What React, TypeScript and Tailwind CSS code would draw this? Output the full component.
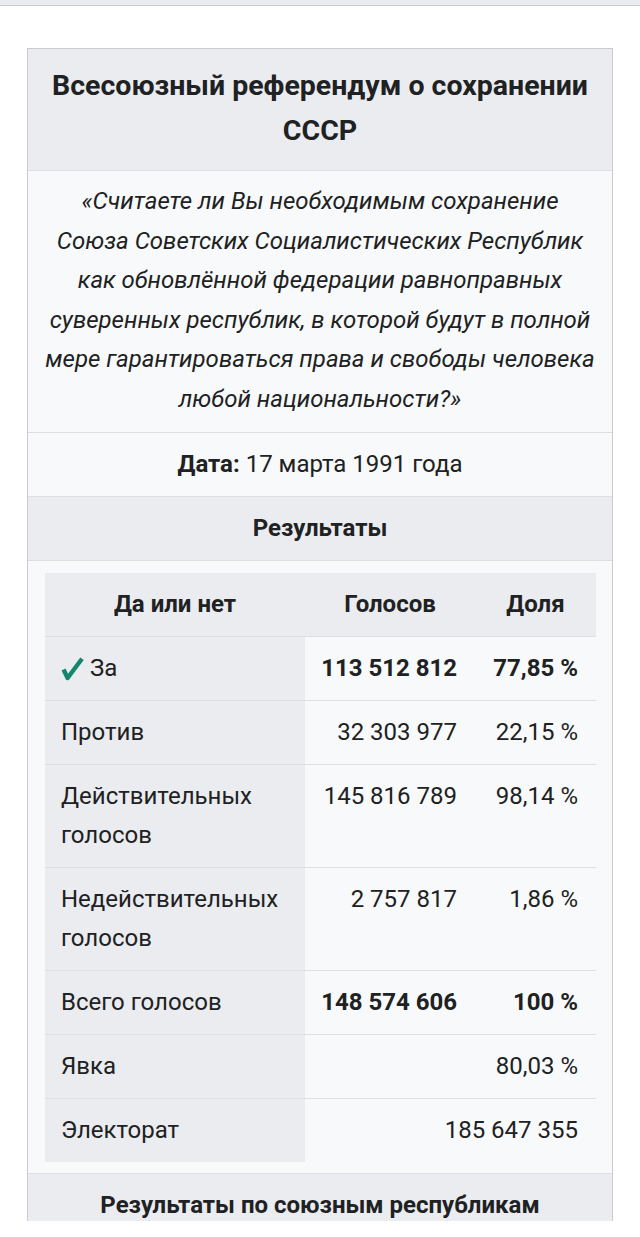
import React from "react";

type Row = {
  label: string;
  votes?: string;
  share?: string;
  bold?: boolean;
  check?: boolean;
  span?: string;
};

const rows: Row[] = [
  { label: "За", votes: "113 512 812", share: "77,85 %", bold: true, check: true },
  { label: "Против", votes: "32 303 977", share: "22,15 %" },
  { label: "Действительных голосов", votes: "145 816 789", share: "98,14 %" },
  { label: "Недействительных голосов", votes: "2 757 817", share: "1,86 %" },
  { label: "Всего голосов", votes: "148 574 606", share: "100 %", bold: true },
  { label: "Явка", votes: "", share: "80,03 %" },
  { label: "Электорат", span: "185 647 355" },
];

const quote = [
  "«Считаете ли Вы необходимым сохранение",
  "Союза Советских Социалистических Республик",
  "как обновлённой федерации равноправных",
  "суверенных республик, в которой будут в полной",
  "мере гарантироваться права и свободы человека",
  "любой национальности?»",
];

const Check = () => (
  <svg width="23" height="24" viewBox="0 0 23 24" className="mr-[6px] inline-block align-[-5px]">
    <path
      d="M2.5 12.5 L6.6 21 L21 1.8"
      fill="none"
      stroke="#14866d"
      strokeWidth="4.4"
      strokeLinejoin="round"
    />
  </svg>
);

export default function App() {
  return (
    <div className="h-[1221px] overflow-hidden bg-white font-['Roboto',sans-serif] text-[#202122]">
      <div className="h-[6px] border-b border-[#c8ccd1] bg-[#eaecf0]" />
      <div className="mx-[27px] mt-[42px] border border-[#c8ccd1] bg-[#f8f9fa]">
        <div className="bg-[#eaecf0] px-3 pb-[17px] pt-[14px] text-center text-[28.5px] font-bold leading-[45px]">
          Всесоюзный референдум о сохранении СССР
        </div>
        <div className="border-t border-[#dcdfe3] px-[4px] pb-[12px] pt-[11px] text-center text-[24px] italic leading-[39.6px]">
          {quote.map((l) => (
            <div key={l} className="whitespace-nowrap">
              {l}
            </div>
          ))}
        </div>
        <div className="border-t border-[#dcdfe3] py-[12px] text-center text-[24px] leading-[39px]">
          <span className="font-bold">Дата:</span> 17 марта 1991 года
        </div>
        <div className="border-t border-[#dcdfe3] bg-[#eaecf0] py-[12px] text-center text-[24px] font-bold leading-[39px]">
          Результаты
        </div>
        <div className="border-t border-[#dcdfe3] pb-[11px] pl-[17px] pr-[16px] pt-[12px]">
          <table className="w-full table-fixed border-collapse text-[24px] leading-[39px]">
            <colgroup>
              <col className="w-[260px]" />
              <col className="w-[170px]" />
              <col />
            </colgroup>
            <thead>
              <tr className="bg-[#eaecf0] font-bold">
                <th className="px-[12px] py-[12px] text-center">Да или нет</th>
                <th className="px-[8px] py-[12px] text-center">Голосов</th>
                <th className="px-[8px] py-[12px] text-center">Доля</th>
              </tr>
            </thead>
            <tbody>
              {rows.map((r) => (
                <tr key={r.label} className="border-t border-[#dcdfe3] align-top">
                  <td className="bg-[#eaecf0] py-[12px] pl-[16px] pr-[6px]">
                    {r.check ? <Check /> : null}
                    {r.label}
                  </td>
                  {r.span ? (
                    <td colSpan={2} className="py-[12px] pr-[18px] text-right">
                      {r.span}
                    </td>
                  ) : (
                    <>
                      <td className={`py-[12px] pr-[18px] text-right ${r.bold ? "font-bold" : ""}`}>{r.votes}</td>
                      <td className={`py-[12px] pr-[18px] text-right ${r.bold ? "font-bold" : ""}`}>{r.share}</td>
                    </>
                  )}
                </tr>
              ))}
            </tbody>
          </table>
        </div>
        <div className="border-t border-[#dcdfe3] bg-[#eaecf0] py-[12px] text-center text-[24px] font-bold leading-[39px]">
          Результаты по союзным республикам
        </div>
        <div className="h-[200px]" />
      </div>
    </div>
  );
}
